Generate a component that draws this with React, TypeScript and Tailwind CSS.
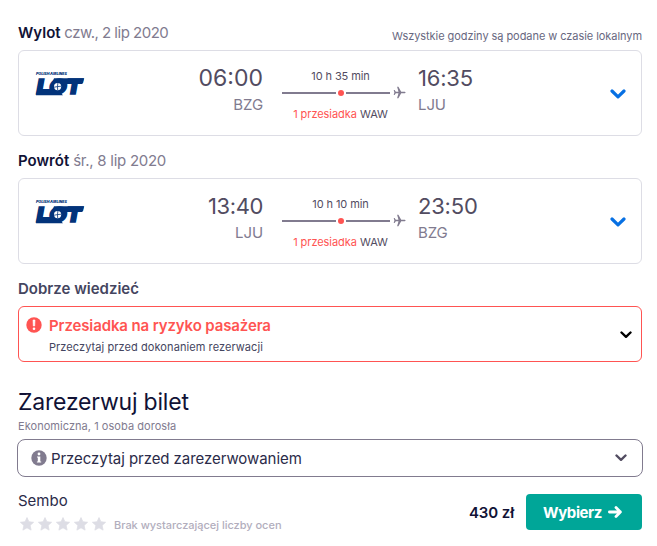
import { ReactNode } from 'react';

interface Leg {
  label: string;
  date: string;
  departure: string;
  from: string;
  duration: string;
  via: string;
  arrival: string;
  to: string;
  dateClass: string;
  departureClass: string;
}

const legs: Leg[] = [
  {
    label: 'Wylot',
    date: 'czw., 2 lip 2020',
    departure: '06:00',
    from: 'BZG',
    duration: '10 h 35 min',
    via: 'WAW',
    arrival: '16:35',
    to: 'LJU',
    dateClass: 'tracking-[-0.5px]',
    departureClass: 'text-[23px]',
  },
  {
    label: 'Powrót',
    date: 'śr., 8 lip 2020',
    departure: '13:40',
    from: 'LJU',
    duration: '10 h 10 min',
    via: 'WAW',
    arrival: '23:50',
    to: 'BZG',
    dateClass: 'tracking-[-0.27px]',
    departureClass: 'text-[22px] tracking-[-0.4px]',
  },
];

function LotLogo() {
  return (
    <svg width="50" height="24" viewBox="0 0 50 24" className="block overflow-visible" fill="#02337a" fontFamily="Inter, sans-serif">
      <text x="1" y="3" fontSize="3.4" fontWeight="900" fontStyle="italic" textLength="31" lengthAdjust="spacingAndGlyphs">
        POLISH AIRLINES
      </text>
      <text x="1.6" y="22" fontSize="20" fontWeight="900" fontStyle="italic" textLength="45" lengthAdjust="spacingAndGlyphs" stroke="#02337a" strokeWidth="1.4">
        LOT
      </text>
      <path d="M19 6.2h30.2L47.4 12H17z" />
      <path d="M2.6 17h19.8L28 23.2H1z" />
      <circle cx="22.6" cy="14.6" r="6" />
      <circle cx="22.6" cy="14.6" r="3.6" fill="#fff" />
      <path d="M22.9 11l-.4 3.6-3.4.6M22.5 14.6l3.6-.4M22.5 14.6l.2 3.4" fill="none" stroke="#02337a" strokeWidth=".8" />
    </svg>
  );
}

function Chevron({ className, width }: { className: string; width: number }) {
  return (
    <svg width={width} height={width * 0.625} viewBox="0 0 16 10" className={className} fill="none" stroke="currentColor" strokeWidth="3.2" strokeLinecap="round" strokeLinejoin="round">
      <path d="M2 2l6 5.8L14 2" />
    </svg>
  );
}

function Plane() {
  return (
    <svg width="13" height="13" viewBox="0 0 13 13" fill="#817b8f" className="ml-[3px] shrink-0">
      <path d="M12.6 6.5c0-.5-.6-.8-1.3-.8H8.2L5.4.8H4.1l1.4 4.9H2.8L1.6 4.1H.7l.7 2.4-.7 2.4h.9l1.2-1.6h2.7l-1.4 4.9h1.3l2.8-4.9h3.1c.7 0 1.3-.3 1.3-.8z" />
    </svg>
  );
}

function Star() {
  return (
    <svg width="14" height="14" viewBox="0 0 14 14" fill="#dddde5" stroke="#dddde5" strokeWidth=".8" strokeLinejoin="round">
      <path d="M7 .6l1.9 4.2 4.7.5-3.5 3.1 1 4.7L7 10.8l-4.1 2.3 1-4.7L.4 5.3l4.7-.5z" />
    </svg>
  );
}

function Badge({ color, children }: { color: string; children: ReactNode }) {
  return (
    <svg width="16" height="16" viewBox="0 0 16 16" className="shrink-0">
      <circle cx="8" cy="8" r="7.7" fill={color} />
      {children}
    </svg>
  );
}

function LegCard({ leg }: { leg: Leg }) {
  return (
    <div className="flex h-[86px] rounded-md border border-[#dddde5]">
      <div className="w-[168px] pt-[21px] pl-[16px]">
        <LotLogo />
      </div>
      <div className="w-[76px] pt-[13px] text-right">
        <div className={`leading-7 text-[#524c61] ${leg.departureClass}`}>{leg.departure}</div>
        <div className="pt-[1px] text-[15px] leading-6 tracking-[-0.1px] text-[#817b8f]">{leg.from}</div>
      </div>
      <div className="ml-[19px] w-[124px] pt-[17px]">
        <div className="pr-[7px] text-center text-[11px] leading-4 tracking-[-0.1px] text-[#524c61]">{leg.duration}</div>
        <div className="mt-[2px] flex h-[13px] items-center">
          <span className="h-[2px] w-[54px] bg-[#817b8f]" />
          <span className="mx-[2px] size-[6px] rounded-full bg-[#ff5452]" />
          <span className="h-[2px] w-[44px] bg-[#817b8f]" />
          <Plane />
        </div>
        <div className="mt-[7px] pr-[7px] text-center text-[11px] leading-4 tracking-[-0.05px] whitespace-nowrap text-[#524c61]">
          <span className="text-[#ff5452]">1 przesiadka</span> {leg.via}
        </div>
      </div>
      <div className="ml-[12px] pt-[13px]">
        <div className="text-[22px] leading-7 tracking-[-0.2px] text-[#524c61]">{leg.arrival}</div>
        <div className="pt-[1px] text-[15px] leading-6 tracking-[-0.1px] text-[#817b8f]">{leg.to}</div>
      </div>
      <Chevron width={16} className="mt-[38px] mr-[15px] ml-auto text-[#0770e3]" />
    </div>
  );
}

export default function App() {
  return (
    <div className="h-[546px] w-[657px] overflow-hidden bg-white pt-[21px] pr-[15px] pl-[18px] font-['Inter',sans-serif] text-[#111236]">
      {legs.map((leg, i) => (
        <section key={leg.label} className="h-[128px]">
          <div className="flex h-[29px] justify-between">
            <h2 className={`text-[15px] leading-6 text-[#817b8f] ${leg.dateClass}`}>
              <span className="font-semibold tracking-[0.02px] text-[#111236]">{leg.label}</span> {leg.date}
            </h2>
            {i === 0 && (
              <span className="pt-[7px] text-[11px] leading-4 tracking-[-0.06px] text-[#68687f]">Wszystkie godziny są podane w czasie lokalnym</span>
            )}
          </div>
          <LegCard leg={leg} />
        </section>
      ))}

      {/* Good to know */}
      <h2 className="h-[29px] text-[15px] leading-6 font-semibold text-[#444560]">Dobrze wiedzieć</h2>
      <div className="flex h-[56px] rounded-md border border-[#ff5452] pt-[10px] pl-[7px]">
        <Badge color="#ff5452">
          <path d="M7 3h2l-.3 6H7.3z" fill="#fff" stroke="#fff" strokeWidth=".6" />
          <circle cx="8" cy="11.8" r="1.3" fill="#fff" />
        </Badge>
        <div className="pl-[7px]">
          <div className="text-[15px] leading-[18px] font-semibold tracking-[-0.12px] text-[#ff5452]">Przesiadka na ryzyko pasażera</div>
          <div className="pt-[4px] text-[11px] leading-4 tracking-[0.08px] text-[#444560]">Przeczytaj przed dokonaniem rezerwacji</div>
        </div>
        <Chevron width={12} className="mt-[14px] mr-[9px] ml-auto text-black" />
      </div>

      {/* Booking */}
      <h1 className="mt-[24px] text-[23px] leading-8 tracking-[-0.2px]">Zarezerwuj bilet</h1>
      <p className="text-[11px] leading-4 tracking-[0.05px] text-[#817b8f]">Ekonomiczna, 1 osoba dorosła</p>
      <div className="mt-[5px] -mr-[1px] -ml-[1px] flex h-[38px] items-center rounded-lg border border-[#817b8f] pr-[15px] pl-[13px] text-[15px] text-[#2b2b49]">
        <Badge color="#817b8f">
          <circle cx="8" cy="4" r="1.4" fill="#fff" />
          <path d="M6 6.4h3.3v5h.9v1H5.9v-1h.9v-4H6z" fill="#fff" />
        </Badge>
        <span className="pt-[2px] pl-[4px] tracking-[-0.06px]">Przeczytaj przed zarezerwowaniem</span>
        <Chevron width={12} className="ml-auto text-[#524c61]" />
      </div>

      <div className="mt-[12px] flex">
        <div>
          <div className="text-[15px] leading-6 text-[#2b2b49]">Sembo</div>
          <div className="mt-[2px] flex items-center gap-[4px] pl-[2px]">
            {[1, 2, 3, 4, 5].map((n) => (
              <Star key={n} />
            ))}
            <span className="pt-[2px] pl-[4px] text-[11px] leading-4 font-medium tracking-[-0.02px] text-[#b2aebd]">Brak wystarczającej liczby ocen</span>
          </div>
        </div>
        <div className="mt-[5px] ml-auto flex h-9 items-center">
          <span className="pt-[2px] text-[15px] font-semibold tracking-[-0.1px]">430 zł</span>
          <button className="ml-[12px] flex h-9 w-[116px] items-center rounded bg-[#00a698] pl-[17px] text-[15px] font-bold text-white">
            <span className="pt-[2px] tracking-[-0.4px]">Wybierz</span>
            <svg width="14" height="12" viewBox="0 0 14 12" className="ml-[6px]" fill="none" stroke="currentColor" strokeWidth="2.8" strokeLinecap="round" strokeLinejoin="round">
              <path d="M1.4 6h11M8 1.6L12.4 6 8 10.4" />
            </svg>
          </button>
        </div>
      </div>
    </div>
  );
}
